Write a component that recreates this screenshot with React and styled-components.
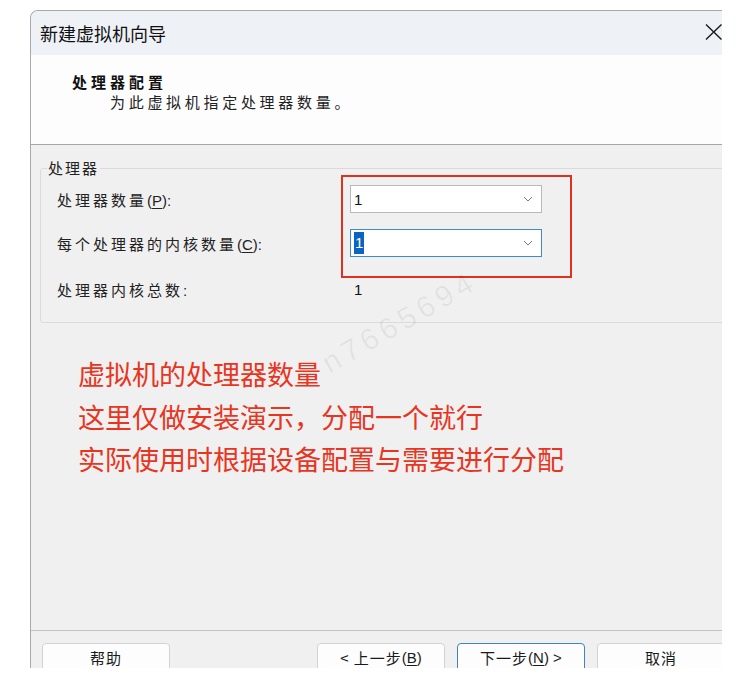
import styled, { createGlobalStyle } from "styled-components";

const GlobalStyle = createGlobalStyle`
  body {
    margin: 0;
    background: #ffffff;
    font-family: "Noto Sans CJK SC", "Liberation Sans", sans-serif;
    color: #1a1a1a;
  }
`;

const Page = styled.div`
  width: 750px;
  height: 679px;
  padding: 10px 0 0 30px;
  box-sizing: border-box;
`;

const Window = styled.div`
  position: relative;
  width: 692px;
  height: 658px;
  display: flex;
  flex-direction: column;
  overflow: hidden;
  border-top: 1px solid #a9a9a9;
  border-left: 1px solid #a9a9a9;
  border-top-left-radius: 8px;
  background: #f0f0f0;
  box-sizing: border-box;
`;

const TitleBar = styled.div`
  height: 44px;
  flex: none;
  display: flex;
  align-items: center;
  justify-content: space-between;
  padding-left: 9px;
  background: #eef2f7;
  font-size: 18px;
  color: #111;
`;

const CloseIcon = styled.svg`
  width: 17px;
  height: 16px;
  margin-top: -3px;
`;

const Header = styled.div`
  height: 90px;
  flex: none;
  box-sizing: border-box;
  padding: 17px 0 0 41px;
  background: #fdfdfd;
  border-bottom: 1px solid #a6a6a6;
`;

const HeaderTitle = styled.div`
  font-size: 15px;
  line-height: 20px;
  font-weight: 700;
  letter-spacing: 4px;
  color: #111;
`;

const HeaderSub = styled.div`
  font-size: 15px;
  line-height: 20px;
  letter-spacing: 3.7px;
  margin-left: 38px;
  color: #222;
`;

const Body = styled.div`
  flex: 1;
  position: relative;
  background: #f0f0f0;
`;

const Group = styled.div`
  position: relative;
  margin: 23px -4px 0 9px;
  height: 155px;
  box-sizing: border-box;
  border: 1px solid #dadada;
  border-radius: 3px;
  padding: 16px 0 0 16px;
`;

const Legend = styled.span`
  position: absolute;
  top: -11px;
  left: 6px;
  padding: 0 1px;
  background: #f0f0f0;
  font-size: 15px;
  line-height: 20px;
  letter-spacing: 2px;
  color: #222;
`;

const Fields = styled.div`
  display: grid;
  grid-template-columns: 293px 192px;
  grid-template-rows: 28px 28px 28px;
  row-gap: 16px;
  align-items: center;
`;

const Label = styled.div`
  font-size: 15px;
  letter-spacing: 3px;
  color: #222;
  margin-top: ${(p) => (p.$shift ? "5px" : "0")};
`;

const Latin = styled.span`
  font-family: "Liberation Sans", sans-serif;
  letter-spacing: 0;
  font-size: 15px;
`;

const Key = styled.span`
  text-decoration: underline;
  text-underline-offset: 2px;
`;

const Value = styled.div`
  font-family: "Liberation Sans", sans-serif;
  font-size: 15px;
  padding-left: 4px;
  color: #111;
  margin-top: ${(p) => (p.$shift ? "5px" : "0")};
`;

const Combo = styled.div`
  height: 28px;
  box-sizing: border-box;
  display: flex;
  align-items: center;
  justify-content: space-between;
  padding: 0 8px 0 3px;
  background: #ffffff;
  border: 1px solid ${(p) => (p.$focused ? "#3d8ccc" : "#b9b9b9")};
  font-family: "Liberation Sans", sans-serif;
  font-size: 15px;
  color: #111;
`;

const Selected = styled.span`
  display: inline-block;
  background: #0a64c4;
  color: #ffffff;
  line-height: 22px;
  padding: 0 1px;
`;

const Chevron = styled.svg`
  width: 10px;
  height: 6px;
`;

const Highlight = styled.div`
  position: absolute;
  left: 300px;
  top: 6px;
  width: 231px;
  height: 103px;
  box-sizing: border-box;
  border: 2.5px solid #e0301e;
`;

const Note = styled.div`
  margin: 30px 0 0 47px;
  font-size: 27px;
  line-height: 42.5px;
  color: #e8351f;
`;

const Watermark = styled.div`
  position: absolute;
  left: 282px;
  top: 160px;
  transform: rotate(-30deg);
  font-family: "Liberation Sans", sans-serif;
  font-size: 30px;
  letter-spacing: 5px;
  color: rgba(0, 0, 0, 0.06);
  pointer-events: none;
`;

const Footer = styled.div`
  height: 38px;
  flex: none;
  box-sizing: border-box;
  display: flex;
  padding: 12px 0 0 11px;
  border-top: 1px solid #c4c4c4;
  background: #f0f0f0;
`;

const ButtonRow = styled.div`
  display: flex;
  gap: 12px;
  margin-left: 147px;
`;

const Button = styled.div`
  flex: none;
  width: 128px;
  height: 34px;
  box-sizing: border-box;
  display: flex;
  justify-content: center;
  padding-top: 3px;
  line-height: 22px;
  background: #fdfdfd;
  border: 1px solid ${(p) => (p.$primary ? "#3c84c6" : "#d3d3d3")};
  border-radius: 4px;
  font-size: 15px;
  letter-spacing: 1px;
  color: #1a1a1a;
`;

function ChevronDown() {
  return (
    <Chevron viewBox="0 0 10 6">
      <path d="M1 1 L5 5 L9 1" fill="none" stroke="#777" strokeWidth="1" />
    </Chevron>
  );
}

export default function App() {
  return (
    <>
      <GlobalStyle />
      <Page>
        <Window>
          <TitleBar>
            <span>新建虚拟机向导</span>
            <CloseIcon viewBox="0 0 17 16">
              <path d="M1 0.5 L16.5 15.5 M16.5 0.5 L1 15.5" stroke="#1a1a1a" strokeWidth="1.4" />
            </CloseIcon>
          </TitleBar>
          <Header>
            <HeaderTitle>处理器配置</HeaderTitle>
            <HeaderSub>为此虚拟机指定处理器数量。</HeaderSub>
          </Header>
          <Body>
            <Group>
              <Legend>处理器</Legend>
              <Fields>
                <Label>
                  处理器数量<Latin>(<Key>P</Key>):</Latin>
                </Label>
                <Combo>
                  <span>1</span>
                  <ChevronDown />
                </Combo>
                <Label>
                  每个处理器的内核数量<Latin>(<Key>C</Key>):</Latin>
                </Label>
                <Combo $focused>
                  <Selected>1</Selected>
                  <ChevronDown />
                </Combo>
                <Label $shift>
                  处理器内核总数<Latin>:</Latin>
                </Label>
                <Value $shift>1</Value>
              </Fields>
              <Highlight />
            </Group>
            <Watermark>n7665694</Watermark>
            <Note>
              虚拟机的处理器数量
              <br />
              这里仅做安装演示，分配一个就行
              <br />
              实际使用时根据设备配置与需要进行分配
            </Note>
          </Body>
          <Footer>
            <Button>帮助</Button>
            <ButtonRow>
              <Button>
                &lt; 上一步<Latin>(<Key>B</Key>)</Latin>
              </Button>
              <Button $primary>
                下一步<Latin>(<Key>N</Key>) &gt;</Latin>
              </Button>
              <Button>取消</Button>
            </ButtonRow>
          </Footer>
        </Window>
      </Page>
    </>
  );
}
